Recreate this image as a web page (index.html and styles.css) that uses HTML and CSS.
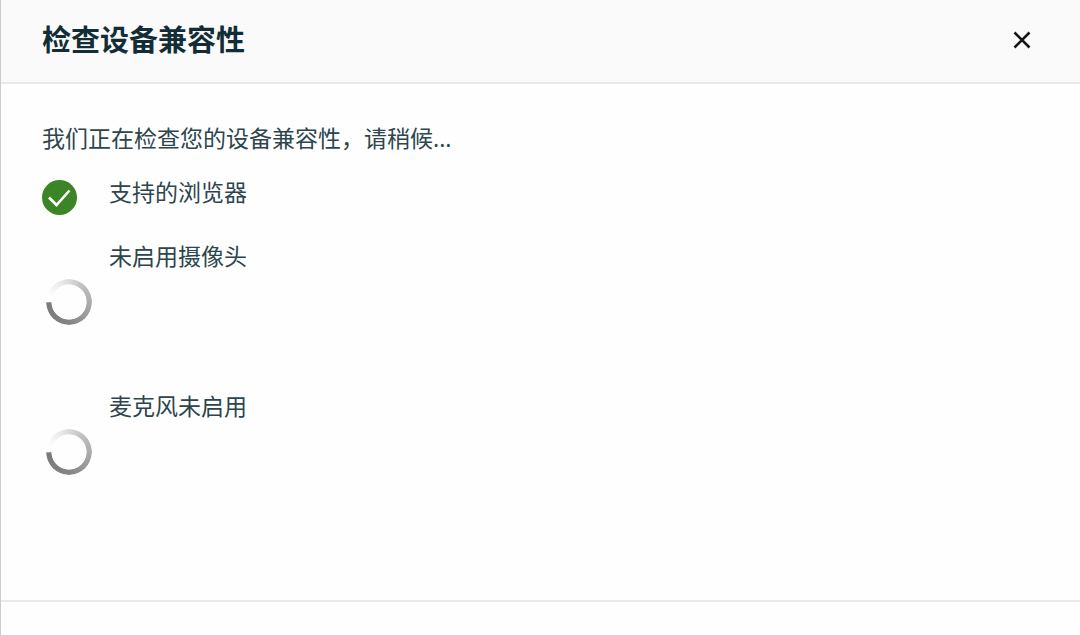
FILE: index.html
```html
<!DOCTYPE html>
<html lang="zh-CN">
<head>
<meta charset="UTF-8">
<meta name="viewport" content="width=device-width, initial-scale=1.0">
<title>检查设备兼容性</title>
<link rel="stylesheet" href="styles.css">
</head>
<body>

<div class="dialog" role="dialog" aria-labelledby="dialogTitle">
    <header class="dialog-header">
        <h1 id="dialogTitle">检查设备兼容性</h1>
        <button type="button" class="close" aria-label="关闭">
            <svg width="18" height="18" viewBox="0 0 18 18">
                <path d="M1.5 1.5 L16.5 16.5 M16.5 1.5 L1.5 16.5" fill="none" stroke="#161616" stroke-width="2.6"/>
            </svg>
        </button>
    </header>

    <main class="dialog-body">
        <p class="intro">我们正在检查您的设备兼容性，请稍候...</p>
        <ul class="checks">
            <li class="check">
                <svg class="icon-ok" viewBox="0 0 35 35">
                    <circle cx="17.5" cy="17.5" r="17.5" fill="#3c8527"/>
                    <path d="M7 17.5 L14.5 25 L27.5 10.5" fill="none" stroke="#fff" stroke-width="2.6"/>
                </svg>
                <span>支持的浏览器</span>
            </li>
            <li class="check loading">
                <div class="spinner"></div>
                <span>未启用摄像头</span>
            </li>
            <li class="check loading">
                <div class="spinner"></div>
                <span>麦克风未启用</span>
            </li>
        </ul>
    </main>

    <footer class="dialog-footer"></footer>
</div>

</body>
</html>
```

FILE: styles.css
```css
body {
    margin: 0;
    font-family: "Noto Sans", "Noto Sans CJK SC", sans-serif;
    font-size: 23px;
    line-height: 34px;
    color: #2d454c;
    background-color: #fefefe;
}
.dialog {
    display: flex;
    flex-direction: column;
    box-sizing: border-box;
    min-height: 100vh;
    border-left: 1px solid #ccc;
}
/* 标题栏 */
.dialog-header {
    display: flex;
    align-items: center;
    justify-content: space-between;
    padding: 19px 41px 21px;
    background-color: #fafafa;
    border-bottom: 2px solid #e6eaea;
}
.dialog-header h1 {
    margin: 0;
    font-size: 29px;
    line-height: 42px;
    font-weight: bold;
    color: #122d35;
}
.close {
    display: flex;
    padding: 8px;
    border: none;
    background: none;
    cursor: pointer;
}
/* 检查列表 */
.dialog-body {
    padding: 37px 41px 85px;
}
.intro {
    margin: 0 0 20px;
}
.checks {
    display: flex;
    flex-direction: column;
    gap: 24px;
    margin: 0;
    padding: 0;
    list-style: none;
}
.check {
    display: grid;
    grid-template-columns: 50px 1fr;
    column-gap: 17px;
    align-items: start;
}
.icon-ok {
    width: 35px;
    height: 35px;
    margin-top: 5px;
}
.check.loading {
    padding-bottom: 40px;
}
.spinner {
    width: 46px;
    height: 46px;
    margin: 40px 0 0 4px;
    border-radius: 50%;
    background: conic-gradient(from 270deg, #fff 0deg, #fff 15deg, #e8e8e8 70deg, #c0c0c0 130deg, #a4a4a4 200deg, #848484 270deg, #7a7a7a 358deg, #fff 360deg);
    -webkit-mask: radial-gradient(closest-side, transparent 75%, #000 78%);
    mask: radial-gradient(closest-side, transparent 75%, #000 78%);
}
.dialog-footer {
    flex: 1;
    border-top: 2px solid #e6eaea;
}
```
